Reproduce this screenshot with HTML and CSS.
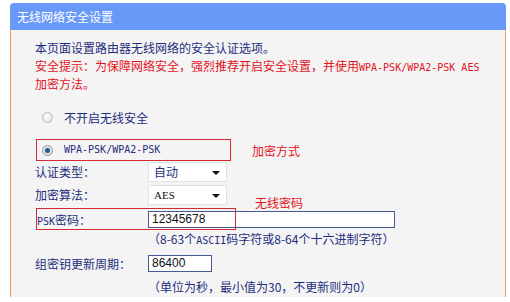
FILE: index.html
```html
<!DOCTYPE html>
<html lang="zh-CN">
<head>
    <meta charset="UTF-8">
    <title>无线网络安全设置</title>
    <link rel="stylesheet" href="styles.css">
</head>
<body>

    <div class="panel">
        <div class="panel-head">无线网络安全设置</div>
        <div class="panel-body">
            <div class="intro">
                <div class="line">本页面设置路由器无线网络的安全认证选项。</div>
                <div class="line red">安全提示：为保障网络安全，强烈推荐开启安全设置，并使用<span class="mono">WPA-PSK/WPA2-PSK AES</span></div>
                <div class="line red">加密方法。</div>
            </div>

            <div class="opt-off">
                <span class="radio"></span>
                <span>不开启无线安全</span>
            </div>

            <div class="wpa-row">
                <div class="wpa-box">
                    <span class="radio checked"></span>
                    <span class="mono">WPA-PSK/WPA2-PSK</span>
                </div>
                <span class="note">加密方式</span>
            </div>

            <div class="field">
                <span class="label">认证类型：</span>
                <div class="select">自动<i class="caret"></i></div>
            </div>
            <div class="field second">
                <span class="label">加密算法：</span>
                <div class="select mono-val">AES<i class="caret"></i></div>
            </div>

            <div class="field psk">
                <span class="note over">无线密码</span>
                <span class="mark"></span>
                <span class="label"><span class="mono">PSK</span>密码：</span>
                <div class="input wide">12345678</div>
            </div>
            <div class="hint">（8-63个<span class="mono">ASCII</span>码字符或8-64个十六进制字符）</div>

            <div class="field group">
                <span class="label">组密钥更新周期：</span>
                <div class="input short">86400</div>
            </div>
            <div class="hint last">（单位为秒，最小值为30，不更新则为0）</div>
        </div>
    </div>

</body>
</html>
```

FILE: styles.css
```css
body {
    margin: 0;
    background-color: #fff;
    font-family: "Noto Sans CJK SC", "Liberation Sans", sans-serif;
    font-size: 12px;
    color: #1e2d7d;
}

.panel {
    margin: 3px 0 0 10px;
    width: 496px;
}

.panel-head {
    height: 27px;
    line-height: 27px;
    padding-left: 7px;
    background-color: #6898f8;
    border-radius: 4px 4px 0 0;
    color: #fff;
}

.panel-body {
    height: 267px;
    padding-left: 24px;
    background-color: #f4f4f4;
    border-left: 1px solid #eba352;
    border-right: 1px solid #eba352;
}

.intro {
    padding-top: 9px;
}

.line {
    height: 18px;
    line-height: 18px;
    white-space: nowrap;
}

.red { color: #e5121c; }

.mono {
    font-family: "DejaVu Sans Mono", monospace;
    font-size: 10px;
    line-height: 10px;
}

/* radio buttons */
.radio {
    display: inline-block;
    width: 9px;
    height: 9px;
    border: 1px solid #b9b9b9;
    border-radius: 50%;
    background: radial-gradient(circle at 40% 40%, #fff 0, #e6e6e6 70%);
    margin-right: 11px;
    box-sizing: content-box;
}

.radio.checked {
    border-color: #8a9aa8;
    background: radial-gradient(circle, #1f4f7a 0, #2d6690 2px, #cfd8de 3px, #f2f2f2 5px);
}

.opt-off {
    display: flex;
    align-items: center;
    height: 18px;
    margin-top: 15px;
    padding-left: 7px;
}

.wpa-row {
    display: flex;
    align-items: center;
    margin-top: 13px;
}

.wpa-box {
    display: flex;
    align-items: center;
    width: 188px;
    height: 20px;
    margin-left: 1px;
    padding-left: 5px;
    border: 1px solid #d42a33;
}

.note {
    color: #e5121c;
    margin-left: 21px;
}

/* form rows */
.field {
    display: flex;
    align-items: center;
    height: 21px;
}

.field.second { margin-top: 2px; }

.field.psk {
    position: relative;
    height: 22px;
    margin-top: 3px;
}

.field.group {
    height: 22px;
    margin-top: 4px;
}

.label {
    width: 113px;
    flex-shrink: 0;
}

.psk .label { padding-left: 2px; width: 111px; }

.select {
    position: relative;
    width: 72px;
    height: 18px;
    line-height: 18px;
    padding-left: 5px;
    background-color: #fff;
    border: 1px solid #e2e2e2;
}

.mono-val {
    font-family: "Liberation Serif", serif;
    font-size: 11px;
    color: #111;
}

.caret {
    position: absolute;
    right: 6px;
    top: 8px;
    border-left: 4px solid transparent;
    border-right: 4px solid transparent;
    border-top: 4px solid #111;
}

.input {
    height: 15px;
    line-height: 15px;
    padding-left: 3px;
    background-color: #fff;
    border: 1px solid #4a5896;
    font-family: "Liberation Sans", sans-serif;
    font-size: 12px;
    color: #111;
}

.input.wide { width: 242px; }
.input.short { width: 59px; }

/* red annotation overlays */
.mark {
    position: absolute;
    left: 1px;
    top: 0;
    width: 198px;
    height: 20px;
    border: 1px solid #d42a33;
}

.note.over {
    position: absolute;
    left: 220px;
    top: -14px;
    margin: 0;
    line-height: 18px;
}

.hint {
    height: 18px;
    line-height: 18px;
    padding-left: 113px;
}

.hint.last { margin-top: 4px; }
```
